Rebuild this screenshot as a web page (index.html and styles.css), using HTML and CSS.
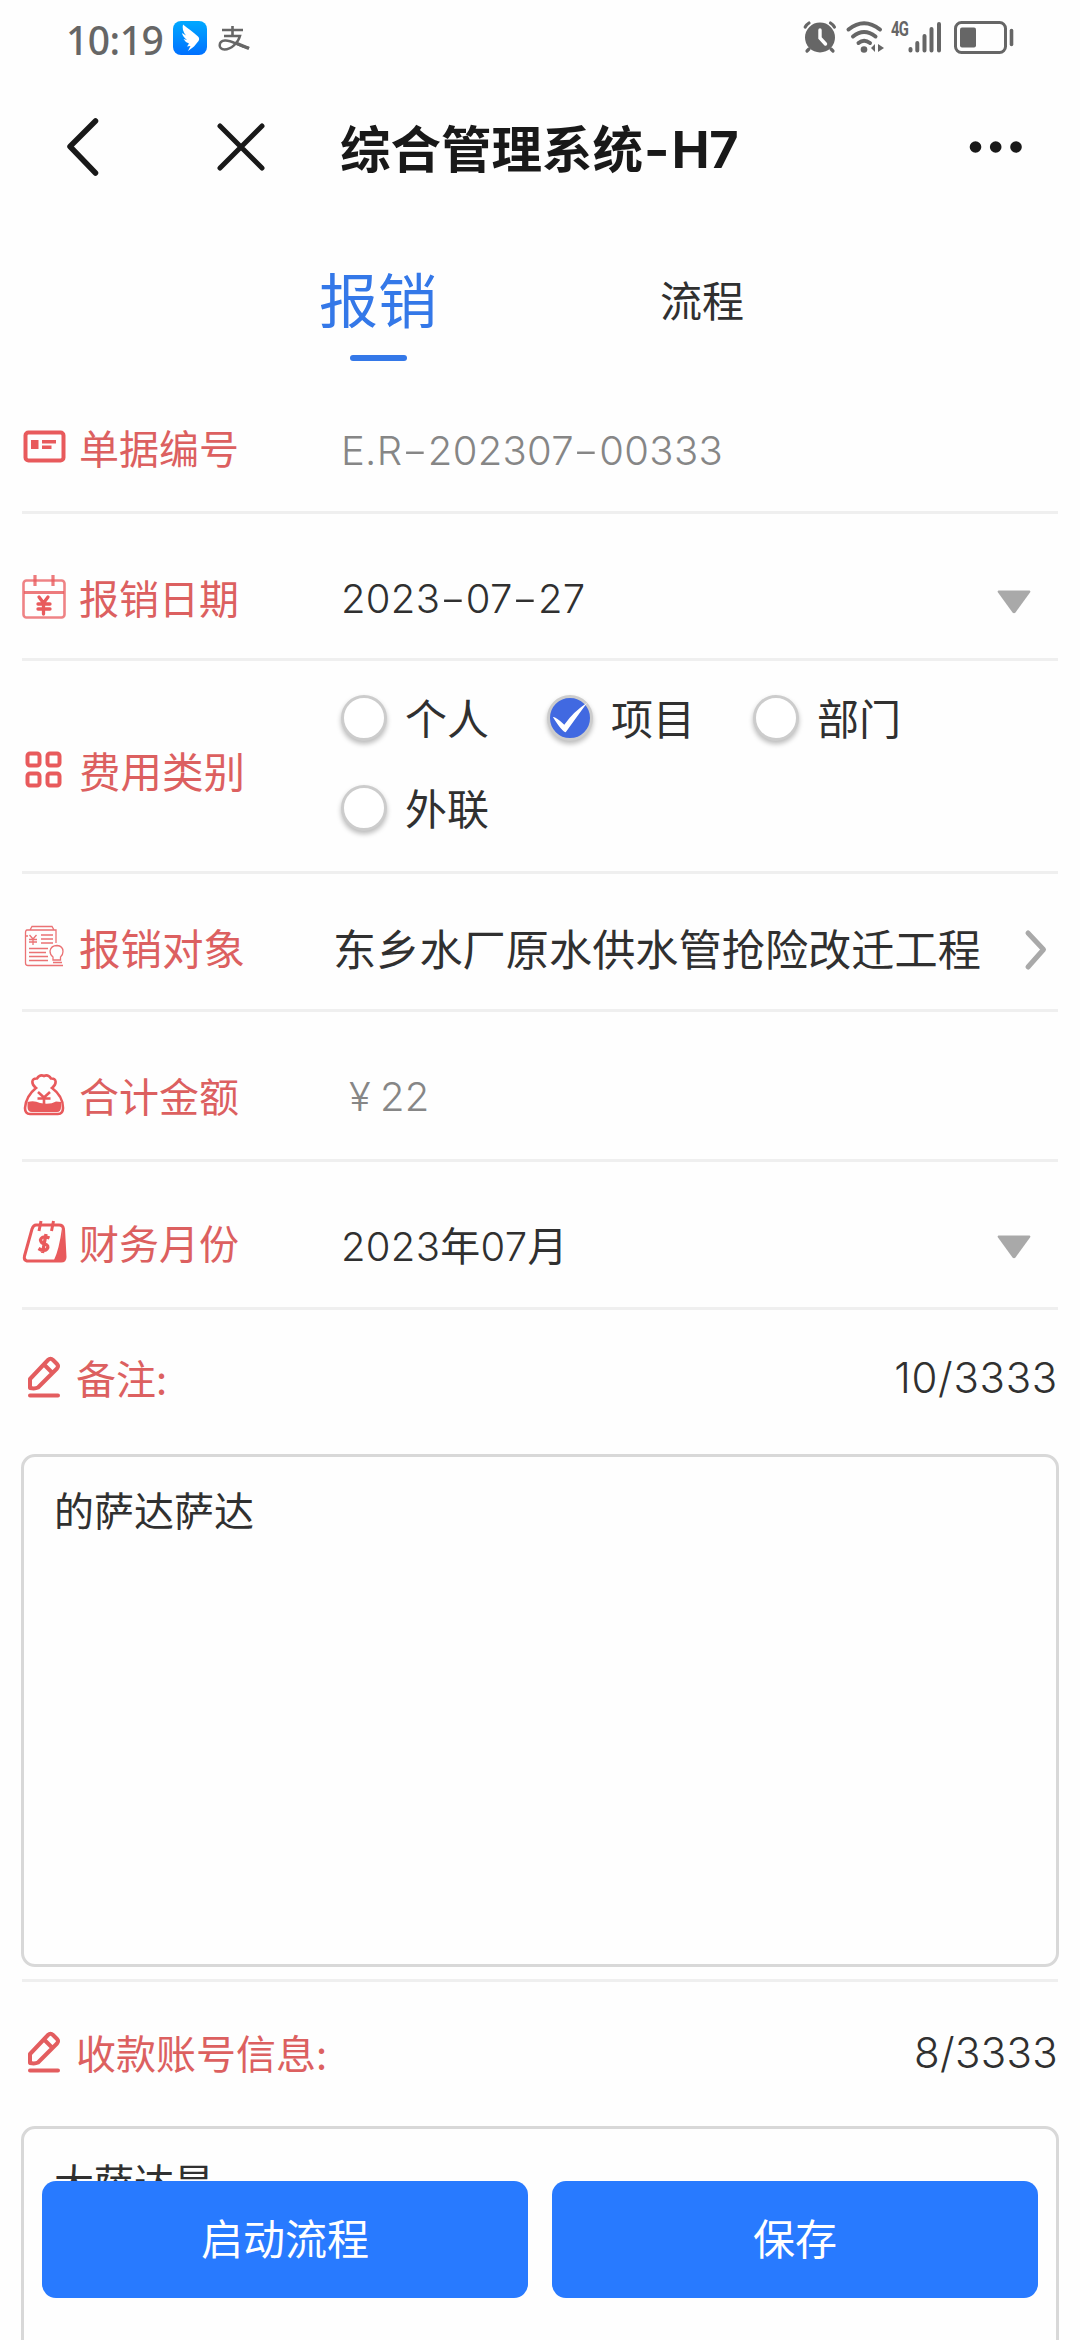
FILE: index.html
```html
<!DOCTYPE html>
<html lang="zh-CN">
<head>
<meta charset="utf-8">
<title>综合管理系统-H7</title>
<link rel="stylesheet" href="styles.css">
</head>
<body>
<div class="screen">
  <header class="status">
    <div class="status-left">
      <span class="time">10:19</span>
      <svg class="ding" viewBox="0 0 34 34"><defs><linearGradient id="dg" x1="0" y1="0" x2="0" y2="1"><stop offset="0" stop-color="#00a9ff"/><stop offset="1" stop-color="#0070ff"/></linearGradient></defs><rect width="34" height="34" rx="8" fill="url(#dg)"/><path d="M10 3.500C15 8 20 10.500 25 15.500Q27 17.500 25.500 20L21 25.500L15 30L17.500 25L14 25.500L16 22.500Q12 21 10.500 18L14 19Q9.500 15.500 9 12L13 14.500Q8.500 9 10 3.500Z" fill="#fff"/></svg>
      <svg class="zhi" viewBox="0 0 32 26"><g fill="none" stroke="#666"><path d="M4 4H25M14.500 0V9.500" stroke-width="2.600"/><path d="M6 10H22C20 17 13 23.500 6.500 23.500C0 23.500 0 15 7 14.500C14 14 20 20 31 22" stroke-width="2.500"/><path d="M19 17.500L31 22.500" stroke-width="3.500"/></g></svg>
    </div>
    <div class="status-right">
      <svg class="alarm" viewBox="0 0 34 32"><g fill="none" stroke="#666" stroke-width="3.200" stroke-linecap="round"><path d="M2.200 6Q3.500 3.500 6 2M27.500 2Q30 3.500 31.400 6M6 28L4 30M28 28L30 30"/></g><circle cx="17" cy="16.500" r="15" fill="#666"/><path d="M17 9V17L22.500 23" fill="none" stroke="#fff" stroke-width="3.400" stroke-linecap="round"/></svg>
      <svg class="wifi" viewBox="0 0 38 32"><g fill="none" stroke="#666" stroke-width="4" stroke-linecap="round"><path d="M2.500 8.500Q18 -4 34 8.500"/><path d="M7 15.500Q18 6.500 29.500 15.500"/><path d="M12.500 22Q18 17.500 24 22"/></g><circle cx="18" cy="28.500" r="3.300" fill="#666"/><path d="M29 23V31L25 27ZM32 23V31L38 27Z" fill="#666"/></svg>
      <span class="net">4G</span>
      <svg class="signal" viewBox="0 0 34 32"><path d="M2.500 28V29.500M9.300 22V29.500M16.500 15V29.500M23.500 8V29.500M31 3V29.500" stroke="#666" stroke-width="4" stroke-linecap="round"/></svg>
      <svg class="battery" viewBox="0 0 60 33"><rect x="1.500" y="1.500" width="50" height="30" rx="6" fill="none" stroke="#666" stroke-width="3"/><rect x="6" y="6.500" width="16" height="20" rx="2" fill="#666"/><path d="M57.500 9.500V23.500" stroke="#666" stroke-width="3.600" stroke-linecap="round"/></svg>
    </div>
  </header>

  <nav class="navbar">
    <svg class="back" viewBox="0 0 34 60"><path d="M29.500 4L4 29.500L29.500 56" fill="none" stroke="#191919" stroke-width="5.500" stroke-linecap="round" stroke-linejoin="round"/></svg>
    <svg class="close" viewBox="0 0 48 48"><path d="M3 3L45 45M45 3L3 45" stroke="#191919" stroke-width="5" stroke-linecap="round"/></svg>
    <h1 class="title">综合管理系统<span class="dash">-</span>H7</h1>
    <svg class="more" viewBox="0 0 54 12"><g fill="#191919"><circle cx="6.500" cy="6" r="5.800"/><circle cx="26.700" cy="6" r="5.800"/><circle cx="47" cy="6" r="5.800"/></g></svg>
  </nav>

  <div class="tabs">
    <div class="tab tab-active">报销</div>
    <div class="tab">流程</div>
  </div>

  <main class="form">
    <section class="row row-number">
      <svg class="icon" viewBox="0 0 44 44"><rect x="3.500" y="7.500" width="38" height="28" rx="3" fill="none" stroke="currentColor" stroke-width="4"/><path d="M9 15h7.500v9H9zM20 15h14v3.500H20zM20 20.500h9.500v3.500H20z" fill="currentColor"/></svg>
      <span class="label">单据编号</span>
      <span class="value muted">E.R<span class="dash">-</span>202307<span class="dash">-</span>00333</span>
    </section>
    <section class="row row-date">
      <svg class="icon" viewBox="0 0 44 44"><g fill="none" stroke="currentColor"><rect x="1.500" y="5.500" width="41" height="37" rx="3" stroke-width="2.600" opacity=".75"/><path d="M2 17.500H42" stroke-width="3" opacity=".8"/><path d="M13 0V11M31 0V11" stroke-width="3.200" opacity=".8"/><path d="M17 22L21.500 28L26 22M21.500 28V39M16 29H28M16 34H28" stroke-width="3.300" stroke-linecap="round"/></g></svg>
      <span class="label">报销日期</span>
      <span class="value">2023<span class="dash">-</span>07<span class="dash">-</span>27</span>
      <svg class="caret" viewBox="0 0 34 24"><path d="M1.500 0.500H32.500Q34 1 33 2.500L18.500 22.500Q17 24 15.500 22.500L1 2.500Q0 1 1.500 0.500Z" fill="#a9a9a9"/></svg>
    </section>
    <section class="row row-type">
      <svg class="icon" viewBox="0 0 44 44"><g fill="none" stroke="currentColor" stroke-width="4"><rect x="5.500" y="4.500" width="12" height="12" rx="2.500"/><rect x="25.500" y="4.500" width="12" height="12" rx="2.500"/><rect x="5.500" y="24.500" width="12" height="12" rx="2.500"/><rect x="25.500" y="24.500" width="12" height="12" rx="2.500"/></g></svg>
      <span class="label">费用类别</span>
      <div class="options">
        <span class="option"><i class="radio"></i>个人</span>
        <span class="option"><i class="radio checked"><svg viewBox="0 0 42 42"><path d="M3 20Q6 19.500 15 28Q25 14 39 5Q28 20 16.500 36Q13 36 3 20Z" fill="#fff"/></svg></i>项目</span>
        <span class="option"><i class="radio"></i>部门</span>
        <span class="option"><i class="radio"></i>外联</span>
      </div>
    </section>
    <section class="row row-target">
      <svg class="icon" viewBox="0 0 44 44"><g fill="none" stroke="currentColor" stroke-width="1.300" opacity=".85"><path d="M8 5L10 1.500H30L32 5M34 18V5H5Q3.500 5 3.500 8V38Q3.500 40.500 6 40.500H41M3.500 11H6M19 10H31M19 14H31M19 18H31M7 23.500H26M7 27.500H24M7 31.500H26M7 35.500H26M31 37.500H40M31 35V32Q28 30 28 26Q29 20.500 35 20.500Q41 21 41 26.500Q41 30 38.500 32V35Z"/><path d="M7.500 10L11 14L14.500 10M11 14V20M7 14.500H15M7 17H15"/></g></svg>
      <span class="label">报销对象</span>
      <span class="value">东乡水厂原水供水管抢险改迁工程</span>
      <svg class="chevron" viewBox="0 0 22 40"><path d="M3 3L18.500 19.500L3 37" fill="none" stroke="#a9a9a9" stroke-width="5" stroke-linecap="round" stroke-linejoin="round"/></svg>
    </section>
    <section class="row row-amount">
      <svg class="icon" viewBox="0 0 44 44"><path d="M14 14C9 10 9 4 15 4.500Q18 0 22 2Q26 0 29 4.500C35 4 35 10 30 14Q41 22 41 34Q41 40 36 40H8Q3 40 3 34Q4 22 14 14Z" fill="none" stroke="currentColor" stroke-width="2.600"/><path d="M5.500 28Q12 26 18 29Q28 31 34 27.500L39 28V33Q39 38 35 38H10Q5.500 38 5.500 33Z" fill="currentColor"/><path d="M16 18L22 23.500L28 18M22 23.500V30M15.500 24.500H28.500" fill="none" stroke="currentColor" stroke-width="2.600"/></svg>
      <span class="label">合计金额</span>
      <span class="value muted amount"><span class="yen">¥</span>22</span>
    </section>
    <section class="row row-month">
      <svg class="icon" viewBox="0 0 44 44"><path d="M14 5H37Q41 5 41.500 9L43 37Q43 41 39 41H5Q1.500 40 2.500 36L10 9Q11.500 5 14 5Z" fill="none" stroke="currentColor" stroke-width="3"/><path d="M40 8L43 40H32Q37 30 40 8Z" fill="currentColor"/><path d="M19 1L17 11M31.500 1L29.500 11" stroke="currentColor" stroke-width="3"/><path d="M27.500 18Q20 15 18.500 20Q19 23.500 23 24Q27.500 25.500 25 29Q22 32 16.500 28.500M24 14L20.500 33" fill="none" stroke="currentColor" stroke-width="3.300"/></svg>
      <span class="label">财务月份</span>
      <span class="value">2023<span class="cjk">年</span>07<span class="cjk">月</span></span>
      <svg class="caret" viewBox="0 0 34 24"><path d="M1.500 0.500H32.500Q34 1 33 2.500L18.500 22.500Q17 24 15.500 22.500L1 2.500Q0 1 1.500 0.500Z" fill="#a9a9a9"/></svg>
    </section>
    <section class="note note-remark">
      <div class="note-head">
        <svg class="pencil" viewBox="0 0 34 42"><g fill="none" stroke="currentColor" stroke-width="4" stroke-linejoin="round" stroke-linecap="round"><path d="M3 32V23L21 4Q23.500 1.500 26 4L30 8Q32 10 30 12.500L11 31.500Q8 33 3 32ZM17 8.500L25.500 17M3 39.500H31"/></g></svg>
        <span class="label">备注:</span>
        <span class="count">10/3333</span>
      </div>
      <div class="textarea">的萨达萨达</div>
    </section>
    <section class="note note-account">
      <div class="note-head">
        <svg class="pencil" viewBox="0 0 34 42"><g fill="none" stroke="currentColor" stroke-width="4" stroke-linejoin="round" stroke-linecap="round"><path d="M3 32V23L21 4Q23.500 1.500 26 4L30 8Q32 10 30 12.500L11 31.500Q8 33 3 32ZM17 8.500L25.500 17M3 39.500H31"/></g></svg>
        <span class="label">收款账号信息:</span>
        <span class="count">8/3333</span>
      </div>
      <div class="textarea">大萨达是</div>
    </section>
  </main>

  <footer class="actions">
    <button class="btn" type="button">启动流程</button>
    <button class="btn" type="button">保存</button>
  </footer>
</div>
</body>
</html>
```

FILE: styles.css
```css
* { box-sizing: border-box; }
body { margin: 0; background: #fdfdfd; }
svg { display: block; flex: none; overflow: visible; }

.screen {
  position: relative;
  width: 1080px;
  height: 2340px;
  overflow: hidden;
  background: #fefefe;
  color: #303030;
  font-family: "Inter", "Noto Sans CJK SC", sans-serif;
  font-size: 40px;
}

.status {
  height: 78px;
  padding: 0 66px 0 66px;
  display: flex;
  justify-content: space-between;
  color: #666;
}
.status-left, .status-right { display: flex; align-items: flex-start; }
.time { width: 107px; margin-top: 16px; font: 500 39px/48px "Noto Sans", sans-serif; letter-spacing: -0.5px; }
.ding { width: 34px; height: 34px; margin-top: 21px; }
.zhi { width: 32px; height: 26px; margin: 26px 0 0 11px; }
.alarm { width: 34px; height: 32px; margin: 21px 9px 0 0; }
.wifi { width: 38px; height: 32px; margin-top: 21px; }
.net { width: 17px; margin: 18px 0 0 7px; font: 700 20px/22px "Roboto", sans-serif; letter-spacing: -1px; transform: scaleX(0.74); transform-origin: left; }
.signal { width: 34px; height: 32px; margin: 21px 12px 0 0; }
.battery { width: 60px; height: 33px; margin-top: 21px; }

.navbar { height: 147px; padding: 0 57px 10px 66px; display: flex; align-items: center; }
.back { width: 34px; height: 60px; }
.close { width: 48px; height: 48px; margin-left: 117px; }
.title { margin: 6px auto 0 75px; font-size: 50.5px; line-height: 70px; font-weight: 700; color: #191919; white-space: nowrap; }
.title .dash { margin: 0 3px 0 2px; transform: scaleX(1.1); }
.more { width: 54px; height: 12px; }

.tabs { height: 165px; padding: 0 216px; display: flex; }
.tab { flex: 1; text-align: center; font-size: 42px; line-height: 60px; padding-top: 44px; font-family: "Noto Sans CJK SC", sans-serif; }
.tab-active { color: #3478e8; font-size: 59px; line-height: 84px; padding-top: 31px; }
.tab-active::after { content: ""; display: block; width: 57px; height: 6px; border-radius: 3px; margin: 15px auto 0; background: #3478e8; }

.form { padding: 0 22px; }
.row { display: flex; align-items: center; border-bottom: 3px solid #efefef; }
.row-number { height: 124px; }
.row-date { height: 147px; padding-top: 27px; }
.row-type { height: 213px; }
.row-target { height: 138px; padding-top: 10px; }
.row-amount { height: 150px; padding-top: 21px; }
.row-month { height: 148px; padding-top: 20px; }
.icon { width: 44px; height: 44px; color: #e85a5c; }
.label { width: 262px; margin-left: 13px; color: #dc6060; font: 400 40px/58px "Noto Sans CJK SC", sans-serif; white-space: nowrap; }
.row .label { flex: none; }
.row-number .icon, .row-number .label { margin-bottom: 8px; }
.row-date .icon, .row-date .label { margin-bottom: 6px; }
.row-type .icon { margin-top: 10px; }
.row-type .label { margin-top: 8px; font-size: 41.5px; }
.row-target .label { font-size: 41.5px; }
.row-amount .label { margin-bottom: 3px; }
.row-month .icon, .row-month .label { margin-bottom: 5px; }
.value { font-weight: 275; line-height: 56px; letter-spacing: 0.3px; white-space: nowrap; }
.dash { display: inline-block; margin: 0 3.5px; transform: scaleX(1.45); }
.row-date .value { margin-bottom: 2px; }
.muted { color: #868686; }
.row-amount .value, .row-month .value { margin-top: 2px; }
.row-target .value { width: 668px; margin-left: -8px; letter-spacing: 0; font: 400 43.2px/60px "Noto Sans CJK SC", sans-serif; }
.cjk { font: 400 40px/56px "Noto Sans CJK SC", sans-serif; }
.yen { margin: 0 9px 0 8px; }
.caret { width: 34px; height: 24px; margin: 4px 27px 0 auto; }
.chevron { width: 22px; height: 40px; margin: 6px 11px 0 auto; }

.options { display: flex; flex-wrap: wrap; row-gap: 30px; padding-bottom: 8px; }
.option { width: 206px; height: 60px; display: flex; align-items: center; font: 400 42px/60px "Noto Sans CJK SC", sans-serif; }
.radio { width: 46px; height: 46px; margin: 2px 18px 0 0; border: 3px solid #ccc; border-radius: 50%; background: #fff; box-shadow: 0 3px 5px #bbb; }
.checked { background: #4169e1; }
.checked svg { width: 40px; height: 40px; }

.note-head { height: 144px; display: flex; align-items: center; padding: 0 0 10px 5px; }
.note-account .note-head { padding-bottom: 4px; }
.pencil { width: 34px; height: 42px; color: #e35d5f; }
.note .label { width: auto; margin-left: 15px; }
.count { margin-left: auto; font-weight: 275; font-size: 42px; letter-spacing: 0.3px; }
.note-remark .count { letter-spacing: 0.7px; }
.textarea { height: 513px; padding: 22px 30px; border: 3px solid #d8d8d8; border-radius: 14px; margin: 0 -1px; line-height: 60px; font-family: "Noto Sans CJK SC", sans-serif; }
.note-remark { height: 672px; border-bottom: 3px solid #efefef; }

.actions { position: absolute; left: 42px; right: 42px; top: 2181px; display: flex; gap: 24px; }
.btn { flex: 1; height: 117px; padding: 0 0 6px; border: 0; border-radius: 14px; background: #287aff; color: #fff; font: 400 42px/60px "Noto Sans CJK SC", sans-serif; }
```
